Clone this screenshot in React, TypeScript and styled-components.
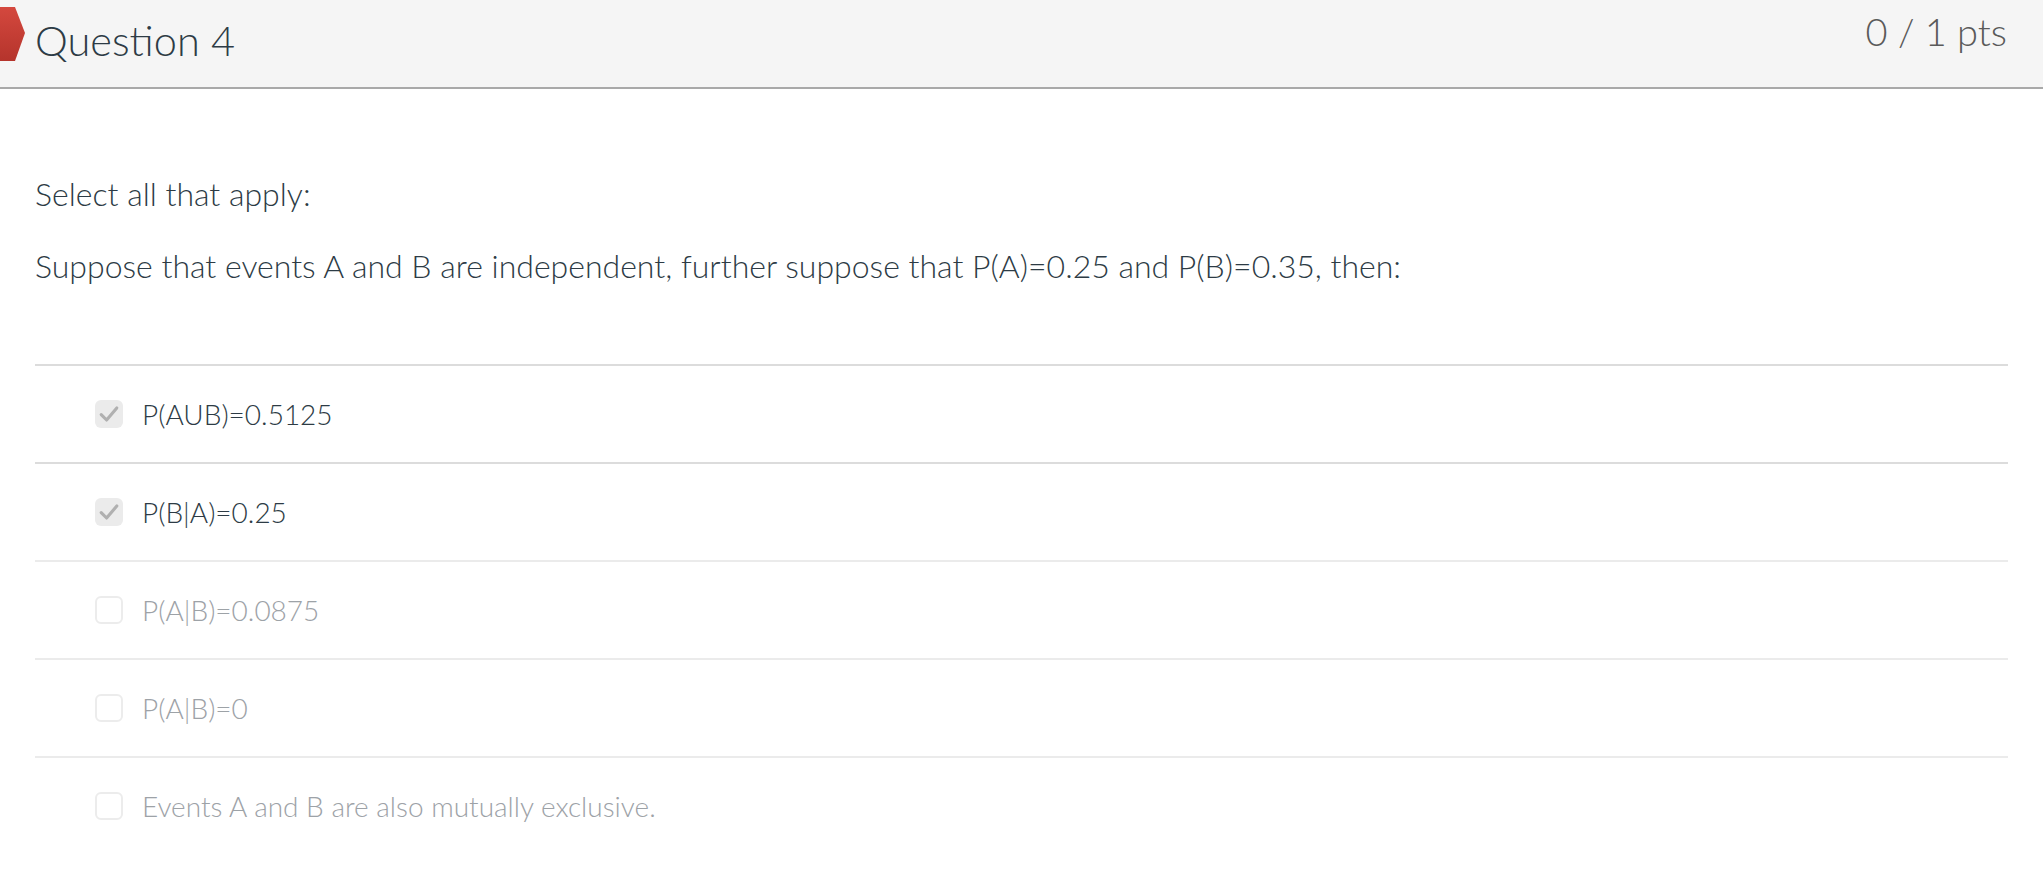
import React from 'react';
import styled, { createGlobalStyle } from 'styled-components';

const TEXT_COLOR = '#2d3b45';
const MUTED_COLOR = '#9da2a7';

const GlobalStyle = createGlobalStyle`
  html, body {
    margin: 0;
    padding: 0;
    background: #fff;
    font-family: Lato, "Open Sans", "Liberation Sans", sans-serif;
    font-weight: 300;
    color: ${TEXT_COLOR};
  }
`;

const Header = styled.div`
  position: relative;
  height: 87px;
  background: #f5f5f5;
  border-bottom: 2px solid #a9a9a9;
  display: flex;
  justify-content: space-between;
  align-items: flex-start;
  padding: 0 36px 0 35px;
`;

const Flag = styled.svg`
  position: absolute;
  left: 0;
  top: 0;
`;

const Title = styled.h2`
  margin: 16px 0 0;
  font-size: 41.5px;
  font-weight: 300;
  line-height: 1.2;
  color: ${TEXT_COLOR};
`;

const Points = styled.div`
  margin-top: 9px;
  font-size: 38px;
  font-weight: 300;
  line-height: 1.2;
  color: #5a5a5a;
`;

const Content = styled.div`
  padding: 82px 35px 0;
`;

const Paragraph = styled.p`
  margin: 0 0 27px;
  font-size: 32px;
  line-height: 45px;
`;

const Answers = styled.div`
  margin-top: 76px;
`;

const Row = styled.div<{ $selected: boolean }>`
  height: 96px;
  border-top: 2px solid ${p => (p.$selected ? '#dcdcdc' : '#ebebeb')};
  display: flex;
  align-items: center;
  gap: 19px;
  padding-left: 60px;
  &:first-child {
    border-top-color: #dcdcdc;
  }
`;

const Box = styled.span<{ $checked: boolean }>`
  box-sizing: border-box;
  width: 28px;
  height: 28px;
  border-radius: 6px;
  flex: none;
  display: flex;
  align-items: center;
  justify-content: center;
  background: ${p => (p.$checked ? '#ebebeb' : '#fff')};
  border: ${p => (p.$checked ? 'none' : '2px solid #ececec')};
`;

const Label = styled.span<{ $selected: boolean }>`
  font-size: 28px;
  font-weight: 300;
  color: ${p => (p.$selected ? TEXT_COLOR : MUTED_COLOR)};
`;

const answers = [
  { text: 'P(AUB)=0.5125', selected: true },
  { text: 'P(B|A)=0.25', selected: true },
  { text: 'P(A|B)=0.0875', selected: false },
  { text: 'P(A|B)=0', selected: false },
  { text: 'Events A and B are also mutually exclusive.', selected: false },
];

const App: React.FC = () => {
  return (
    <>
      <GlobalStyle />
      <Header>
        <Flag width="26" height="64" viewBox="0 0 26 64">
          <defs>
            <linearGradient id="flagGrad" x1="0" y1="0" x2="0" y2="1">
              <stop offset="0" stopColor="#d4483e" />
              <stop offset="1" stopColor="#b5342c" />
            </linearGradient>
          </defs>
          <polygon points="0,7 15,7 25,33 15,61 0,61" fill="url(#flagGrad)" />
        </Flag>
        <Title>Question 4</Title>
        <Points>0 / 1 pts</Points>
      </Header>
      <Content>
        <Paragraph>Select all that apply:</Paragraph>
        <Paragraph>
          Suppose that events A and B are independent, further suppose that P(A)=0.25 and P(B)=0.35, then:
        </Paragraph>
        <Answers>
          {answers.map(a => (
            <Row key={a.text} $selected={a.selected}>
              <Box $checked={a.selected}>
                {a.selected && (
                  <svg width="24" height="24" viewBox="0 0 20 20">
                    <path d="M3.5 10.5 L8 15 L16.5 5" fill="none" stroke="#b0b0b0" strokeWidth="2.6" strokeLinecap="round" strokeLinejoin="round" />
                  </svg>
                )}
              </Box>
              <Label $selected={a.selected}>{a.text}</Label>
            </Row>
          ))}
        </Answers>
      </Content>
    </>
  );
};

export default App;
